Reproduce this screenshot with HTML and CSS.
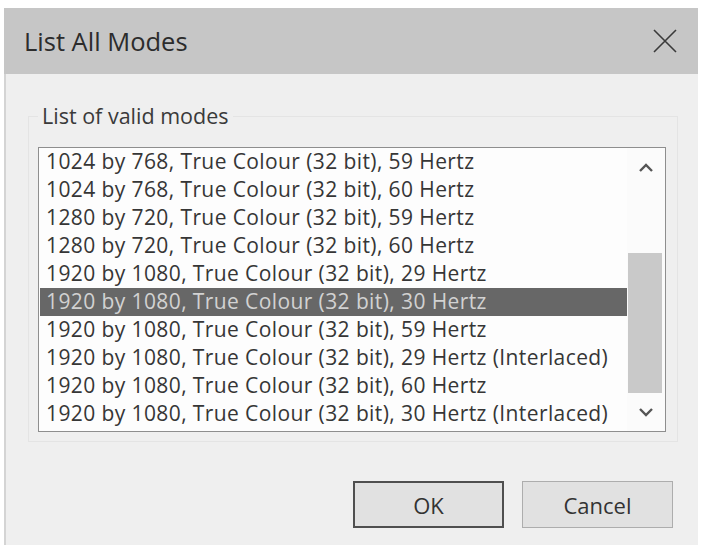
FILE: index.html
```html
<!DOCTYPE html>
<html lang="en">
<head>
    <meta charset="UTF-8">
    <meta name="viewport" content="width=device-width, initial-scale=1.0">
    <title>List All Modes</title>
    <link rel="stylesheet" href="styles.css">
</head>
<body>
    <div class="dialog">
        <div class="titlebar">
            <span class="title">List All Modes</span>
            <button class="close" aria-label="Close">
                <svg width="26" height="26" viewBox="0 0 26 26">
                    <path d="M2 2 L24 24 M24 2 L2 24" stroke="#3a3a3a" stroke-width="1.6" fill="none"/>
                </svg>
            </button>
        </div>

        <div class="dialog-body">
            <fieldset class="group">
                <legend>List of valid modes</legend>
                <div class="listbox">
                    <ul class="modes">
                        <li>1024 by 768, True Colour (32 bit), 59 Hertz</li>
                        <li>1024 by 768, True Colour (32 bit), 60 Hertz</li>
                        <li>1280 by 720, True Colour (32 bit), 59 Hertz</li>
                        <li>1280 by 720, True Colour (32 bit), 60 Hertz</li>
                        <li>1920 by 1080, True Colour (32 bit), 29 Hertz</li>
                        <li class="selected">1920 by 1080, True Colour (32 bit), 30 Hertz</li>
                        <li>1920 by 1080, True Colour (32 bit), 59 Hertz</li>
                        <li>1920 by 1080, True Colour (32 bit), 29 Hertz (Interlaced)</li>
                        <li>1920 by 1080, True Colour (32 bit), 60 Hertz</li>
                        <li>1920 by 1080, True Colour (32 bit), 30 Hertz (Interlaced)</li>
                    </ul>
                    <div class="scrollbar">
                        <div class="arrow up">
                            <svg width="16" height="10" viewBox="0 0 16 10">
                                <path d="M2 8 L8 2 L14 8" stroke="#555" stroke-width="2.4" fill="none"/>
                            </svg>
                        </div>
                        <div class="track">
                            <div class="thumb"></div>
                        </div>
                        <div class="arrow down">
                            <svg width="16" height="10" viewBox="0 0 16 10">
                                <path d="M2 2 L8 8 L14 2" stroke="#555" stroke-width="2.4" fill="none"/>
                            </svg>
                        </div>
                    </div>
                </div>
            </fieldset>

            <div class="buttons">
                <button class="btn default">OK</button>
                <button class="btn">Cancel</button>
            </div>
        </div>
    </div>
</body>
</html>
```

FILE: styles.css
```css
body {
    margin: 0;
    background: #ffffff;
    font-family: "Open Sans", "Noto Sans", sans-serif;
    color: #333333;
}

.dialog {
    margin: 8px 3px 0 4px;
    height: 537px;
    display: flex;
    flex-direction: column;
}

.titlebar {
    height: 66px;
    background: #c6c6c6;
    display: flex;
    align-items: center;
    justify-content: space-between;
    padding: 0 20px;
}

.title {
    font-size: 25.5px;
    color: #2c2c2c;
    margin-top: -1px;
}

.close {
    border: none;
    background: none;
    padding: 0;
    width: 26px;
    height: 26px;
    margin-top: -1px;
}

.dialog-body {
    flex: 1;
    background: #efefef;
    border-left: 2px solid #d4d4d4;
    padding-top: 28px;
}

.group {
    margin: 0 20px 0 22px;
    padding: 17px 11px 9px 9px;
    border: 1px solid #e4e4e4;
}

.group legend {
    padding: 0 4px;
    font-size: 21.5px;
    line-height: 28px;
    color: #3a3a3a;
}

.listbox {
    height: 283px;
    border: 1px solid #8e8e8e;
    background: #fdfdfd;
    display: flex;
}

.modes {
    list-style: none;
    margin: 0;
    padding: 0 0 0 1px;
    flex: 1;
    font-family: "Open Sans", "Noto Sans", sans-serif;
    font-size: 21px;
    letter-spacing: 0.4px;
    color: #363636;
}

.modes li {
    height: 28px;
    line-height: 27px;
    padding-left: 6px;
    white-space: nowrap;
}

.modes li.selected {
    background: #676767;
    color: #d2d2d2;
}

.scrollbar {
    width: 38px;
    display: flex;
    flex-direction: column;
    background: #fbfbfb;
}

.arrow {
    display: flex;
    align-items: center;
    justify-content: center;
}

.arrow.up {
    height: 40px;
}

.arrow.down {
    height: 38px;
}

.track {
    flex: 1;
    padding: 0 3px 0 1px;
}

.thumb {
    margin-top: 65px;
    height: 140px;
    background: #c9c9c9;
}

.buttons {
    display: flex;
    justify-content: flex-end;
    gap: 18px;
    margin-top: 39px;
    padding-right: 25px;
}

.btn {
    width: 151px;
    height: 47px;
    background: #e1e1e1;
    border: 1px solid #adadad;
    font-family: "Open Sans", "Noto Sans", sans-serif;
    font-size: 22px;
    color: #333333;
    padding: 0;
}

.btn.default {
    border: 2px solid #4f4f4f;
}
```
